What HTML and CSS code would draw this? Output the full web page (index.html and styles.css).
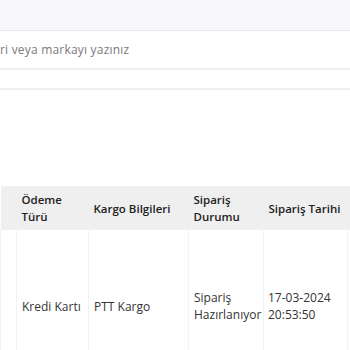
FILE: index.html
```html
<!DOCTYPE html>
<html lang="tr">
<head>
<meta charset="utf-8">
<link rel="stylesheet" href="styles.css">
</head>
<body>
<div class="topbar"></div>
<div class="search"><span class="placeholder">ri veya markayı yazınız</span></div>
<div class="strip"></div>
<div class="spacer"></div>
<table class="orders">
  <thead>
    <tr>
      <th class="c0"></th>
      <th class="c1">Ödeme Türü</th>
      <th class="c2">Kargo Bilgileri</th>
      <th class="c3">Sipariş Durumu</th>
      <th class="c4 nowrap">Sipariş Tarihi</th>
      <th class="c5"></th>
    </tr>
  </thead>
  <tbody>
    <tr>
      <td class="c0"></td>
      <td class="c1">Kredi Kartı</td>
      <td class="c2">PTT Kargo</td>
      <td class="c3">Sipariş Hazırlanıyor</td>
      <td class="c4">17-03-2024 20:53:50</td>
      <td class="c5"></td>
    </tr>
  </tbody>
</table>
</body>
</html>
```

FILE: styles.css
```css
html, body {
  margin: 0;
  padding: 0;
  background: #ffffff;
  overflow: hidden;
  width: 350px;
  height: 350px;
  font-family: "Open Sans", "Liberation Sans", sans-serif;
}
.topbar {
  height: 30px;
  background: #f8f7fc;
  border-bottom: 1px solid #ebe9f2;
}
.search {
  height: 37px;
  border-bottom: 2px solid #efefef;
  display: flex;
  align-items: center;
}
.placeholder {
  font-size: 12px;
  color: #7a7a7a;
  letter-spacing: 0.2px;
}
.strip {
  height: 18px;
  border-bottom: 2px solid #eeeeee;
}
.spacer {
  height: 96px;
}
.orders {
  border-collapse: collapse;
  table-layout: fixed;
  width: 350px;
  color: #2b2b2b;
}
.orders th {
  background: #efefef;
  height: 44px;
  padding: 0 5px;
  text-align: left;
  font-size: 11.5px;
  font-weight: 600;
  line-height: 17px;
  color: #222;
}
.orders th.nowrap { white-space: nowrap; }
.orders td {
  height: 152px;
  padding: 0 5px;
  font-size: 12px;
  line-height: 17px;
  color: #333;
  border-left: 1px solid #f3f3f3;
  border-right: 1px solid #f3f3f3;
  vertical-align: middle;
}
.orders .c0, .orders .c5 { padding: 0; }
.orders td.c4 { padding-left: 4px; }
.c0 { width: 16px; }
.c1 { width: 62px; }
.c2 { width: 90px; }
.c3 { width: 65px; }
.c4 { width: 74px; }
.c5 { width: 3px; }
```
